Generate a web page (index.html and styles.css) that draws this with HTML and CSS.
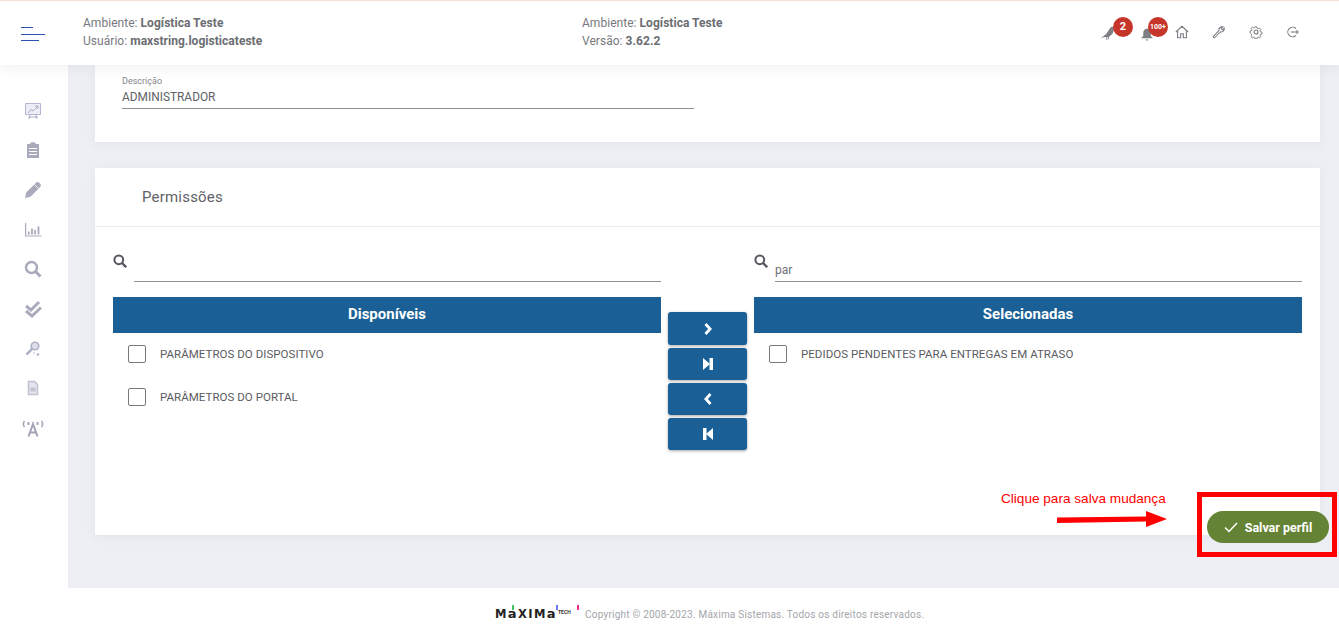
FILE: index.html
```html
<!DOCTYPE html>
<html lang="pt-BR">
<head>
<meta charset="utf-8">
<title>Permissões</title>
<link rel="stylesheet" href="styles.css">
</head>
<body>
<div class="page">
  <header class="topbar">
    <div class="burger"><span class="b1"></span><span class="b2"></span><span class="b3"></span></div>
    <div class="info info-left">
      <div>Ambiente: <b>Logística Teste</b></div>
      <div>Usuário: <b>maxstring.logisticateste</b></div>
    </div>
    <div class="info info-mid">
      <div>Ambiente: <b>Logística Teste</b></div>
      <div>Versão: <b>3.62.2</b></div>
    </div>
    <div class="tools">
      <div class="tool tool-bird">
        <svg width="20" height="20" viewBox="0 0 22 22"><path fill="#7d7f85" d="M1 19l6-5 4-6c1-2 4-2 5-1l-1 3c0 3-2 6-5 7v3H9v-2.500H8V21H7v-3.500L4 18z"/></svg>
        <span class="badge badge-a">2</span>
      </div>
      <div class="tool tool-bell">
        <svg width="14" height="15" viewBox="0 0 18 20"><path fill="#7d7f85" d="M9 2c3 0 5 3 5 6v4l3 3H1l3-3V8c0-3 2-6 5-6zM7 16.500h4c0 2-4 2-4 0z"/></svg>
        <span class="badge badge-b">100+</span>
      </div>
      <svg class="ico-home" width="14" height="14" viewBox="0 0 16 16"><path fill="none" stroke="#77797f" stroke-width="1.200" d="M1 8l7-6.500L15 8M3 7v7.500h3.500V10h3v4.500H13V7"/></svg>
      <svg class="ico-wrench" width="14" height="14" viewBox="0 0 16 16"><path fill="none" stroke="#77797f" stroke-width="1.200" d="M2 12.500l6-6c-.6-2.500 1.500-5 4.500-4.500L10.500 4l1.500 1.500 2-2c.5 3-2 5-4.500 4.500l-6 6c-1 1-2.700-.5-1.500-1.500z"/></svg>
      <svg class="ico-gear" width="14" height="14" viewBox="0 0 16 16"><circle cx="8" cy="8" r="2.300" fill="none" stroke="#77797f" stroke-width="1.200"/><path fill="none" stroke="#77797f" stroke-width="1.200" d="M6.800 1.500h2.400l.4 1.900 1.300.6 1.700-1 1.600 1.800-1.100 1.600.5 1.300 1.900.5v2.400l-1.900.4-.5 1.300 1.100 1.600-1.700 1.600-1.600-1-1.300.5-.5 1.900H6.800l-.4-1.900-1.300-.5-1.600 1-1.800-1.700 1.100-1.600-.5-1.300L.5 9.200V6.800l1.800-.5.500-1.300-1-1.600 1.700-1.700 1.600 1 1.300-.6z" transform="translate(.8 .8) scale(.9)"/></svg>
      <svg class="ico-exit" width="14" height="14" viewBox="0 0 16 16"><path fill="none" stroke="#77797f" stroke-width="1.200" d="M12.500 4A5.500 5.500 0 1 0 12.500 12M6.500 8H15M13 6l2 2-2 2"/></svg>
    </div>
  </header>

  <div class="shell">
    <nav class="side">
      <svg width="18" height="18" viewBox="0 0 18 18"><path fill="#ecedf6" stroke="#b5b7d2" d="M1.500 1.500h15v11h-15z"/><path fill="none" stroke="#a9abc8" d="M4 11l3-3.500 2 1.500 5-5M11 4h3v3M5 17l1-4M13 17l-1-4M4.500 15h9"/></svg>
      <svg width="18" height="18" viewBox="0 1 18 18"><path fill="#a9abbc" d="M3 3h3c0-2.500 6-2.500 6 0h3v14H3z"/><path stroke="#fff" d="M5 7.500h8M5 10.500h8M5 13.500h8"/></svg>
      <svg width="18" height="18" viewBox="0 0 18 18"><path fill="#a9abbc" d="M1 17l1.200-5.500L12 1.800c1-1 2.200-1 3.200 0l1 1c1 1 1 2.200 0 3.200L6.500 15.800z"/><path stroke="#fff" stroke-width=".8" d="M10.500 3.500l4 4"/></svg>
      <svg width="18" height="18" viewBox="0 0 18 18"><path fill="none" stroke="#a9abbc" stroke-width="1.200" d="M1.600 2v13h16"/><path fill="none" stroke="#a9abbc" stroke-width="1.800" d="M4.800 13.500v-3M8 13.500V7.500M11 13.500V9M14.500 13.500V5.500"/></svg>
      <svg width="18" height="18" viewBox="0 0 18 18"><circle cx="7.500" cy="7.500" r="5.500" fill="none" stroke="#a9abbc" stroke-width="2.500"/><path stroke="#a9abbc" stroke-width="3" d="M11.500 11.500l5 5"/></svg>
      <svg width="18" height="18" viewBox="0 0 18 18"><path fill="none" stroke="#a9abbc" stroke-width="3" d="M2 6l5 4 8-8M2 11l6 5 9-8.500"/></svg>
      <svg width="18" height="18" viewBox="0 0 18 18"><circle cx="11" cy="6" r="3.800" fill="#dddeea" stroke="#b0b2c6" stroke-width="1.600"/><path stroke="#b0b2c6" stroke-width="2.500" d="M8.500 8.500l-6 6"/><circle cx="14" cy="14.500" r="1.300" fill="#b0b2c6"/><circle cx="10" cy="13" r=".8" fill="#b0b2c6"/></svg>
      <svg width="18" height="18" viewBox="0 0 18 18"><path fill="#e3e4ec" stroke="#c0c1d0" stroke-width="1.500" d="M4.500 2.500h6l3 3v10h-9z"/><path stroke="#c4c5d3" stroke-width="4" d="M6.500 10.500h5"/></svg>
      <svg width="22" height="18" viewBox="0 0 22 18"><path fill="none" stroke="#a2a4b8" stroke-width="1.500" d="M2.500 2c-1.500 2-1.500 4 0 6M19.500 2c1.500 2 1.500 4 0 6"/><path fill="none" stroke="#a2a4b8" stroke-width="2" d="M6.500 17.500L11 5l4.500 12.500M8 13.500h6M6.500 3v3M15.500 3v3"/></svg>
    </nav>

    <div class="main">
      <main class="content">
        <section class="card card-desc">
          <div class="field">
            <label class="field-label">Descrição</label>
            <div class="field-value">ADMINISTRADOR</div>
          </div>
        </section>

        <section class="card card-perm">
          <h2 class="perm-title">Permissões</h2>
          <div class="transfer">
            <div class="col">
              <div class="search">
                <svg class="search-ico" width="14" height="14" viewBox="0 0 14 14"><circle cx="5.800" cy="5.800" r="4.400" fill="none" stroke="#55575f" stroke-width="2"/><path stroke="#55575f" stroke-width="2.400" d="M9 9l4.200 4.200"/></svg>
                <div class="search-input"></div>
              </div>
              <div class="col-head">Disponíveis</div>
              <ul class="list">
                <li><span class="check"></span>PARÂMETROS DO DISPOSITIVO</li>
                <li><span class="check"></span>PARÂMETROS DO PORTAL</li>
              </ul>
            </div>
            <div class="moves">
              <button class="move"><svg width="10" height="12" viewBox="0 0 10 12"><path fill="none" stroke="#fff" stroke-width="2.800" d="M2.500 1l4.600 5-4.600 5"/></svg></button>
              <button class="move"><svg width="10" height="12" viewBox="0 0 10 12"><path fill="#fff" d="M0 0l7 6-7 6z"/><path fill="#fff" d="M6.500 0H10v12H6.500z"/></svg></button>
              <button class="move"><svg width="10" height="12" viewBox="0 0 10 12"><path fill="none" stroke="#fff" stroke-width="2.800" d="M7.500 1L2.900 6l4.600 5"/></svg></button>
              <button class="move"><svg width="10" height="12" viewBox="0 0 10 12"><path fill="#fff" d="M10 0L3 6l7 6z"/><path fill="#fff" d="M0 0h3.500v12H0z"/></svg></button>
            </div>
            <div class="col">
              <div class="search">
                <svg class="search-ico" width="14" height="14" viewBox="0 0 14 14"><circle cx="5.800" cy="5.800" r="4.400" fill="none" stroke="#55575f" stroke-width="2"/><path stroke="#55575f" stroke-width="2.400" d="M9 9l4.200 4.200"/></svg>
                <div class="search-input">par</div>
              </div>
              <div class="col-head">Selecionadas</div>
              <ul class="list">
                <li><span class="check"></span>PEDIDOS PENDENTES PARA ENTREGAS EM ATRASO</li>
              </ul>
            </div>
          </div>
        </section>
      </main>
      <footer class="foot">
        <span class="logo"><span class="logo-word">M<span class="logo-a">a</span>XIM<span class="logo-a">a</span></span><span class="logo-tech">TECH</span><i class="tick t1"></i><i class="tick t2"></i><i class="tick t3"></i></span>
        <span class="copy">Copyright © 2008-2023. Máxima Sistemas. Todos os direitos reservados.</span>
      </footer>
    </div>
  </div>

  <div class="note">Clique para salva mudança</div>
  <svg class="arrow" width="110" height="16" viewBox="0 0 110 16"><path fill="#f00" d="M0 6.500L89 5.500V0l21 8-21 8v-5.500L0 12z"/></svg>
  <div class="redbox"></div>
  <button class="save"><svg width="14" height="11" viewBox="0 0 14 11"><path fill="none" stroke="#fff" stroke-width="1.500" d="M1 5.500l4 4 8-8.500"/></svg>Salvar perfil</button>
</div>
</body>
</html>
```
FILE: styles.css
```css
* { box-sizing: border-box; }
html, body { margin: 0; padding: 0; }
body { font-family: Roboto, "Liberation Sans", sans-serif; color: #5f6167; background: #fff; overflow: hidden; }
.page { position: relative; width: 1339px; height: 632px; overflow: hidden; display: flex; flex-direction: column; }

.topbar { position: relative; z-index: 2; flex: 0 0 65px; display: flex; background: #fff; border-top: 1px solid #f8dfd6; box-shadow: 0 2px 12px rgba(90,90,120,.09); }
.burger { position: absolute; left: 21px; top: 26px; width: 24px; height: 15px; }
.burger span { display: block; height: 1px; background: #2a52b0; margin-bottom: 5.500px; }
.b1 { width: 12px; }
.b2 { width: 24px; }
.b3 { width: 18px; }
.info { position: absolute; top: 13px; font-size: 12px; line-height: 18px; color: #77797e; letter-spacing: .04px; }
.info b { font-weight: 700; color: #6b6d72; }
.info-left { left: 83px; }
.info-mid { left: 582px; }
.tools { position: absolute; left: 0; top: 0; width: 100%; height: 64px; }
.tools > svg, .tool { position: absolute; }
.tool svg { display: block; }
.tool-bird { left: 1100px; top: 20px; }
.tool-bell { left: 1140px; top: 26px; }
.ico-home { left: 1175px; top: 24px; }
.ico-wrench { left: 1212px; top: 24px; }
.ico-gear { left: 1249px; top: 24px; }
.ico-exit { left: 1285px; top: 24px; }
.badge { position: absolute; width: 20px; height: 20px; border-radius: 50%; background: #c5352a; color: #fff; font-weight: 700; text-align: center; line-height: 20px; }
.badge-a { left: 13px; top: -4px; font-size: 11px; }
.badge-b { left: 8px; top: -10px; font-size: 7px; }

.shell { flex: 1; display: flex; min-height: 0; }
.side { flex: 0 0 68px; background: #fff; display: flex; flex-direction: column; align-items: center; padding-top: 37px; gap: 21.600px; }
.side svg { display: block; margin-left: -2px; }
.main { flex: 1; display: flex; flex-direction: column; min-width: 0; background: #eeeff5; }
.content { flex: 1; padding: 0 19px 0 27px; }

.card { background: #fff; box-shadow: 0 2px 10px rgba(100,100,130,.08); }
.card-desc { height: 77px; margin-bottom: 26px; padding: 11px 27px 0; }
.field { width: 572px; }
.field-label { display: block; font-size: 9px; line-height: 11px; color: #85878c; }
.field-value { font-size: 11.900px; line-height: 17px; padding: 2px 0; color: #606267; border-bottom: 1px solid #8f9094; }

.card-perm { height: 367px; }
.perm-title { margin: 0; height: 59px; padding: 20px 0 0 47px; font-size: 15px; line-height: 18px; font-weight: 400; color: #5f6167; letter-spacing: .2px; border-bottom: 1px solid #ecedf2; }
.transfer { display: flex; padding: 0 18px; }
.col { flex: 0 0 548px; }
.search { position: relative; height: 70px; padding: 0 0 0 21px; }
.search-ico { position: absolute; left: 0; top: 27px; }
.search-input { position: absolute; left: 21px; right: 0; top: 34px; height: 21px; font-size: 12px; line-height: 18px; border-bottom: 1px solid #8f9094; color: #6f7176; }
.col-head { height: 36px; background: #1a6096; color: #fff; text-align: center; font-size: 15px; line-height: 34px; font-weight: 700; }
.list { list-style: none; margin: 0; padding: 12px 0 0 15px; }
.list li { display: flex; align-items: center; height: 18px; margin-bottom: 25px; font-size: 11.500px; letter-spacing: .04px; color: #5a5c61; }
.check { flex: 0 0 18px; height: 18px; margin-right: 14px; border: 1px solid #77797e; border-radius: 2px; background: #fff; }

.moves { flex: 0 0 93px; padding: 85px 7px 0; display: flex; flex-direction: column; gap: 3px; }
.move { width: 79px; height: 32px; padding: 0; border: 0; border-radius: 3px; background: #1a6096; box-shadow: 0 1px 3px rgba(0,0,0,.35); display: flex; align-items: center; justify-content: center; }
.move:first-child { height: 33px; }

.foot { flex: 0 0 44px; background: #fff; display: flex; align-items: center; padding: 8px 0 0 426px; }
.logo { position: relative; display: block; flex: 0 0 91px; height: 16px; }
.logo-word { position: absolute; left: 1px; top: 0; font-family: "DejaVu Sans", sans-serif; font-size: 11.500px; line-height: 16px; font-weight: 700; color: #222; letter-spacing: 1.400px; }
.logo-a { font-size: 13px; }
.logo-tech { position: absolute; left: 64px; top: 2px; font-size: 5px; line-height: 8px; font-weight: 700; color: #333; }
.tick { position: absolute; width: 2px; height: 5px; }
.t1 { left: 18px; top: -1px; background: #43c464; }
.t2 { left: 62px; top: -1px; background: #6a7cf5; }
.t3 { left: 83px; top: -1px; background: #ee2a8f; }
.copy { font-size: 10px; color: #a3a5aa; letter-spacing: .22px; }

.note { position: absolute; left: 1001px; top: 490px; font-family: "Liberation Sans", sans-serif; font-size: 13.600px; line-height: 17px; color: #f00; }
.arrow { position: absolute; left: 1057px; top: 511px; }
.redbox { position: absolute; left: 1197px; top: 492px; width: 140px; height: 65px; border: 5px solid #f00; }
.save { position: absolute; left: 1207px; top: 511px; width: 122px; height: 32px; border: 0; border-radius: 16px; background: #658335; color: #fff; font-family: Roboto, sans-serif; font-size: 12.500px; font-weight: 700; display: flex; align-items: center; justify-content: center; gap: 7px; }
```
